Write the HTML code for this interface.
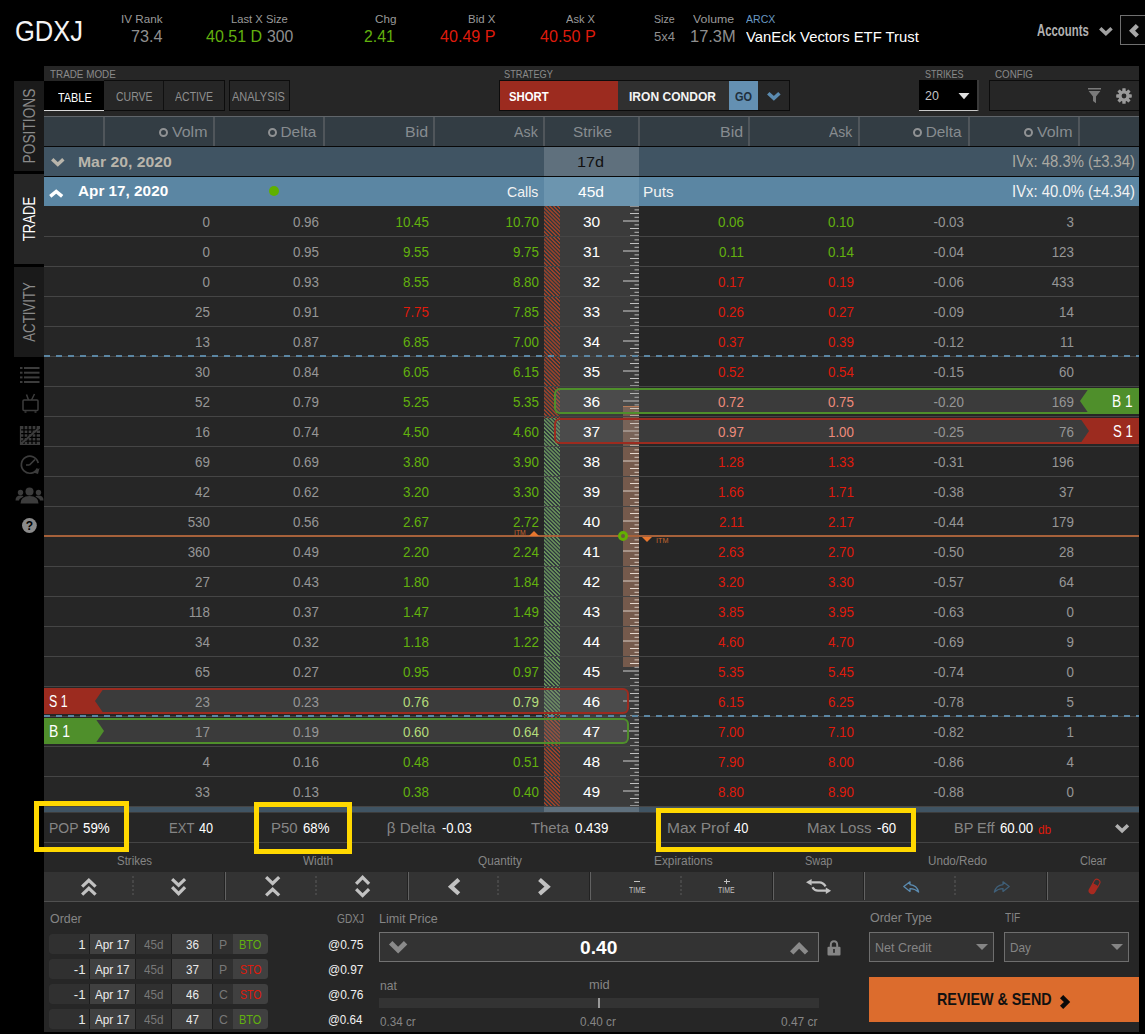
<!DOCTYPE html>
<html><head><meta charset="utf-8"><title>GDXJ Trade</title>
<style>
*{box-sizing:border-box;margin:0;padding:0}
html,body{width:1145px;height:1034px;background:#000;overflow:hidden}
body{font-family:"Liberation Sans","DejaVu Sans",sans-serif;color:#999;position:relative;font-size:14px}
.a{position:absolute;white-space:nowrap}
.g{color:#62b10e}
.rd{color:#df1b0c}
.pg{color:#b4dc7a}
.pr{color:#ee8a7a}
.n{color:#969696}
.cell{position:absolute;height:30px;line-height:33.4px;font-size:14.4px;text-align:right;width:100px;transform:scaleX(.93);transform-origin:100% 50%}
.rowline{position:absolute;left:44px;width:1095px;height:1px;background:#454545}
.strike{position:absolute;left:560.6px;width:62px;height:30px;line-height:31px;text-align:center;color:#fff;font-size:15.5px}
.sep{position:absolute;top:117px;height:29px;width:2px;background:#50565b}
.ring{position:absolute;width:9.4px;height:9.4px;border:2.6px solid #909294;border-radius:50%}
</style></head><body>

<div class="a" style="left:14.81px;top:12.93px;font-size:28.6px;line-height:37px;color:#f4f4f4;transform:scaleX(0.8923);transform-origin:0 50%;">GDXJ</div>
<div class="a" style="left:120.81px;top:11.47px;font-size:11.75px;line-height:15px;color:#9a9a9a;transform:scaleX(0.9921);transform-origin:0 50%;">IV Rank</div>
<div class="a" style="left:131.00px;top:26.46px;font-size:16.43px;line-height:21px;color:#8f8f8f;transform:scaleX(0.9865);transform-origin:0 50%;">73.4</div>
<div class="a" style="left:230.50px;top:11.47px;font-size:11.75px;line-height:15px;color:#9a9a9a;transform:scaleX(0.9550);transform-origin:0 50%;">Last X Size</div>
<div class="a" style="left:205.70px;top:26.46px;font-size:16.43px;line-height:21px;color:#62b10e;transform:scaleX(0.9765);transform-origin:0 50%;">40.51 D</div>
<div class="a" style="left:266.70px;top:26.46px;font-size:16.43px;line-height:21px;color:#8f8f8f;transform:scaleX(0.9609);transform-origin:0 50%;">300</div>
<div class="a" style="left:374.70px;top:11.47px;font-size:11.75px;line-height:15px;color:#9a9a9a;transform:scaleX(0.9943);transform-origin:0 50%;">Chg</div>
<div class="a" style="left:363.70px;top:26.46px;font-size:16.43px;line-height:21px;color:#62b10e;transform:scaleX(0.9614);transform-origin:0 50%;">2.41</div>
<div class="a" style="left:467.70px;top:11.47px;font-size:11.75px;line-height:15px;color:#9a9a9a;transform:scaleX(0.9736);transform-origin:0 50%;">Bid X</div>
<div class="a" style="left:439.60px;top:26.46px;font-size:16.43px;line-height:21px;color:#df1b0c;transform:scaleX(0.9813);transform-origin:0 50%;">40.49 P</div>
<div class="a" style="left:566.20px;top:11.47px;font-size:11.75px;line-height:15px;color:#9a9a9a;transform:scaleX(0.9432);transform-origin:0 50%;">Ask X</div>
<div class="a" style="left:539.50px;top:26.46px;font-size:16.43px;line-height:21px;color:#df1b0c;transform:scaleX(0.9849);transform-origin:0 50%;">40.50 P</div>
<div class="a" style="left:654.40px;top:11.47px;font-size:11.75px;line-height:15px;color:#9a9a9a;transform:scaleX(0.9004);transform-origin:0 50%;">Size</div>
<div class="a" style="left:654.40px;top:28.27px;font-size:13.52px;line-height:18px;color:#8f8f8f;transform:scaleX(0.9652);transform-origin:0 50%;">5x4</div>
<div class="a" style="left:693.20px;top:11.47px;font-size:11.75px;line-height:15px;color:#9a9a9a;transform:scaleX(1.0490);transform-origin:0 50%;">Volume</div>
<div class="a" style="left:690.00px;top:26.46px;font-size:16.43px;line-height:21px;color:#8f8f8f;">17.3M</div>
<div class="a" style="left:746.00px;top:11.47px;font-size:11.75px;line-height:15px;color:#6a9ac4;transform:scaleX(0.8961);transform-origin:0 50%;">ARCX</div>
<div class="a" style="left:746.00px;top:26.66px;font-size:15.18px;line-height:20px;color:#fff;transform:scaleX(0.9773);transform-origin:0 50%;">VanEck Vectors ETF Trust</div>
<div class="a" style="left:1037.10px;top:19.86px;font-size:15.81px;line-height:21px;color:#b0b0b0;font-weight:bold;transform:scaleX(0.7190);transform-origin:0 50%;">Accounts</div>
<svg class="a" style="left:1099.2px;top:27px;overflow:visible" width="13.80" height="9.00"><path d="M1.24 1.24 L6.90 6.53 L12.56 1.24" fill="none" stroke="#a0a0a0" stroke-width="3.50" stroke-miterlimit="10"/></svg>
<div class="a" style="left:1120px;top:15px;width:30px;height:30px;background:#050505;border:1px solid #707070"></div>
<svg class="a" style="left:1129.4px;top:24.4px;overflow:visible" width="9.90" height="13.60"><path d="M8.35 1.55 L3.10 6.80 L8.35 12.05" fill="none" stroke="#a8a8a8" stroke-width="4.38" stroke-miterlimit="10"/></svg>
<div class="a" style="left:14px;top:81px;width:30px;height:90px;background:#1a1a1a;"></div>
<div class="a" style="left:-71px;top:114.5px;width:200px;height:22px;transform:rotate(-90deg)"><svg width="200" height="22" style="overflow:visible"><text x="100" y="16.800" text-anchor="middle" textLength="75.0" lengthAdjust="spacingAndGlyphs" font-family="Liberation Sans, sans-serif" font-size="16.800" fill="#8a8a8a">POSITIONS</text></svg></div>
<div class="a" style="left:14px;top:174px;width:30px;height:90px;background:#262626;"></div>
<div class="a" style="left:-71px;top:207.9px;width:200px;height:22px;transform:rotate(-90deg)"><svg width="200" height="22" style="overflow:visible"><text x="100" y="16.800" text-anchor="middle" textLength="44.5" lengthAdjust="spacingAndGlyphs" font-family="Liberation Sans, sans-serif" font-size="16.800" fill="#fff">TRADE</text></svg></div>
<div class="a" style="left:14px;top:267px;width:30px;height:90px;background:#1a1a1a;"></div>
<div class="a" style="left:-71px;top:300.9px;width:200px;height:22px;transform:rotate(-90deg)"><svg width="200" height="22" style="overflow:visible"><text x="100" y="16.800" text-anchor="middle" textLength="59.4" lengthAdjust="spacingAndGlyphs" font-family="Liberation Sans, sans-serif" font-size="16.800" fill="#8a8a8a">ACTIVITY</text></svg></div>
<svg class="a" style="left:14px;top:360px" width="30" height="180" viewBox="0 0 30 180">
<g fill="#3c3c3c">
 <rect x="6" y="7" width="2.500" height="2"/><rect x="10" y="7" width="15.500" height="2"/>
 <rect x="6" y="11.700" width="2.500" height="2"/><rect x="10" y="11.700" width="15.500" height="2"/>
 <rect x="6" y="16.400" width="2.500" height="2"/><rect x="10" y="16.400" width="15.500" height="2"/>
 <rect x="6" y="21" width="2.500" height="2"/><rect x="10" y="21" width="15.500" height="2"/>
</g>
<g fill="none" stroke="#3c3c3c" stroke-width="1.500">
 <rect x="9" y="40" width="15" height="10.500" rx="1"/><path d="M14.500 40 L12.500 34.500 M17.500 40 L20.500 34 M10.500 52 h2 M20.500 52 h2"/>
</g>
<rect x="6" y="66" width="20" height="19" fill="#3c3c3c"/>
<g stroke="#000" stroke-width="1.300"><path d="M6 69.800h20M6 73.600h20M6 77.400h20M6 81.200h20M10 66v19M14 66v19M18 66v19M22 66v19"/></g>
<path d="M8 83 L25 68" stroke="#3c3c3c" stroke-width="1.800"/><path d="M6.500 66v18.500h19.500" stroke="#3c3c3c" stroke-width="1.200" fill="none"/>
<g fill="none" stroke="#3c3c3c" stroke-width="1.700"><path d="M23.500 108.500 A8.500 8.500 0 1 1 24.200 103"/><path d="M15.500 105 L21 99.500 M15.500 105 h-3.500"/></g>
<path d="M19.500 112.500 L25.500 108 L24 114z" fill="#3c3c3c"/>
<g fill="#3c3c3c"><circle cx="15.500" cy="131.500" r="4"/><path d="M6.500 143.500 q0 -7.500 9 -7.500 q9 0 9 7.500z"/><circle cx="6.500" cy="132.500" r="2.700"/><circle cx="24.500" cy="132.500" r="2.700"/><path d="M1.500 140.500 q0 -5 5 -5 q2.500 0 3 1 q-4 2 -4.500 4z M29.500 140.500 q0 -5 -5 -5 q-2.500 0 -3 1 q4 2 4.500 4z"/></g>
<circle cx="15.400" cy="165.500" r="7.400" fill="#8a8a8a"/>
<text x="15.400" y="170" font-size="12" font-weight="bold" text-anchor="middle" fill="#000" font-family="Liberation Sans, sans-serif">?</text>
</svg>
<div class="a" style="left:44px;top:66px;width:1095px;height:965.5px;background:#262626;"></div>
<div class="a" style="left:49.70px;top:67.17px;font-size:10.92px;line-height:14px;color:#8a8a8a;transform:scaleX(0.9042);transform-origin:0 50%;">TRADE MODE</div>
<div class="a" style="left:504.20px;top:67.17px;font-size:10.92px;line-height:14px;color:#8a8a8a;transform:scaleX(0.8433);transform-origin:0 50%;">STRATEGY</div>
<div class="a" style="left:924.50px;top:67.17px;font-size:10.92px;line-height:14px;color:#8a8a8a;transform:scaleX(0.8256);transform-origin:0 50%;">STRIKES</div>
<div class="a" style="left:994.70px;top:67.17px;font-size:10.92px;line-height:14px;color:#8a8a8a;transform:scaleX(0.8944);transform-origin:0 50%;">CONFIG</div>
<div class="a" style="left:44px;top:81px;width:60px;height:29px;background:#000;"></div>
<div class="a" style="left:44px;top:110px;width:60px;height:1px;background:#d8d8d8;"></div>
<div class="a" style="left:104px;top:80px;width:121px;height:31px;background:transparent;border:1px solid #0c0c0c;border-left:none"></div>
<div class="a" style="left:163px;top:81px;width:1px;height:29px;background:#101010;"></div>
<div class="a" style="left:229px;top:80px;width:61px;height:31px;background:transparent;border:1px solid #0c0c0c"></div>
<div class="a" style="left:57.60px;top:88.77px;font-size:13.31px;line-height:17px;color:#fff;transform:scaleX(0.8190);transform-origin:0 50%;">TABLE</div>
<div class="a" style="left:115.50px;top:88.27px;font-size:13.31px;line-height:17px;color:#8f8f8f;transform:scaleX(0.7882);transform-origin:0 50%;">CURVE</div>
<div class="a" style="left:175.20px;top:88.27px;font-size:13.31px;line-height:17px;color:#8f8f8f;transform:scaleX(0.7932);transform-origin:0 50%;">ACTIVE</div>
<div class="a" style="left:232.00px;top:88.27px;font-size:13.31px;line-height:17px;color:#8f8f8f;transform:scaleX(0.8258);transform-origin:0 50%;">ANALYSIS</div>
<div class="a" style="left:499px;top:80px;width:291px;height:31px;background:#303030;border:1px solid #0c0c0c"></div>
<div class="a" style="left:500px;top:81px;width:118px;height:29px;background:#9c2b1f;"></div>
<div class="a" style="left:508.90px;top:87.97px;font-size:13.31px;line-height:17px;color:#fff;font-weight:bold;transform:scaleX(0.8531);transform-origin:0 50%;">SHORT</div>
<div class="a" style="left:629.30px;top:87.97px;font-size:13.31px;line-height:17px;color:#f4f4f4;font-weight:bold;transform:scaleX(0.9053);transform-origin:0 50%;">IRON CONDOR</div>
<div class="a" style="left:729px;top:81px;width:29px;height:29px;background:#6490b2;"></div>
<div class="a" style="left:734.70px;top:87.97px;font-size:13.31px;line-height:17px;color:#1f2f3c;font-weight:bold;transform:scaleX(0.8209);transform-origin:0 50%;">GO</div>
<div class="a" style="left:758px;top:81px;width:31px;height:29px;background:#262626;"></div>
<svg class="a" style="left:767.1px;top:92px;overflow:visible" width="13.70" height="8.80"><path d="M1.27 1.27 L6.85 6.25 L12.43 1.27" fill="none" stroke="#5b8bb0" stroke-width="3.60" stroke-miterlimit="10"/></svg>
<div class="a" style="left:919px;top:80px;width:60px;height:31px;background:#000;border-bottom:1px solid #c8c8c8;border-right:2px solid #3a3a3a"></div>
<div class="a" style="left:925.20px;top:86.87px;font-size:13.31px;line-height:17px;color:#c4c4c4;transform:scaleX(0.9378);transform-origin:0 50%;">20</div>
<svg class="a" style="left:958px;top:93px" width="12" height="7" viewBox="0 0 12 7"><path d="M0.500 0 H11.500 L6 6.200z" fill="#e0e0e0"/></svg>
<div class="a" style="left:989px;top:80px;width:150px;height:31px;background:transparent;border:1px solid #0c0c0c;border-right:none"></div>
<svg class="a" style="left:1087px;top:87px" width="15" height="18" viewBox="0 0 15 18"><path d="M1 1h13v1.500h-13z M1.600 4 h11.800 l-4.400 5.500 v6.800 l-3 -2.200 v-4.600z" fill="#7a7a7a"/></svg>
<svg class="a" style="left:1116px;top:88px" width="16" height="16" viewBox="0 0 16 16"><g fill="#9a9a9a"><circle cx="8" cy="8" r="5.600"/>
<rect x="6.300" y="0.200" width="3.400" height="15.600" rx=".6"/><rect x="0.200" y="6.300" width="15.600" height="3.400" rx=".6"/>
<rect x="6.300" y="0.200" width="3.400" height="15.600" rx=".6" transform="rotate(45 8 8)"/><rect x="6.300" y="0.200" width="3.400" height="15.600" rx=".6" transform="rotate(-45 8 8)"/></g><circle cx="8" cy="8" r="2.400" fill="#262626"/></svg>
<div class="a" style="left:44px;top:116px;width:1095px;height:30px;background:#333d44;"></div>
<div class="a" style="left:44px;top:116px;width:1095px;height:1px;background:#60656a;"></div>
<div class="a" style="left:44px;top:146px;width:1095px;height:1px;background:#080808;"></div>
<div class="a" style="left:44px;top:147px;width:1095px;height:29px;background:#405463;"></div>
<div class="a" style="left:44px;top:176px;width:1095px;height:1px;background:#080808;"></div>
<div class="a" style="left:44px;top:177px;width:1095px;height:29px;background:#5b86a3;"></div>
<div class="sep" style="left:103px"></div>
<div class="sep" style="left:213px"></div>
<div class="sep" style="left:323px"></div>
<div class="sep" style="left:433px"></div>
<div class="sep" style="left:543px"></div>
<div class="sep" style="left:638px"></div>
<div class="sep" style="left:748px"></div>
<div class="sep" style="left:858px"></div>
<div class="sep" style="left:968px"></div>
<div class="sep" style="left:1078px"></div>
<div class="a" style="left:172.30px;top:122.16px;font-size:15.39px;line-height:20px;color:#878c90;transform:scaleX(1.0368);transform-origin:0 50%;">Volm</div>
<div class="ring" style="left:159px;top:127.500px"></div>
<div class="a" style="left:280.50px;top:122.16px;font-size:15.39px;line-height:20px;color:#878c90;">Delta</div>
<div class="ring" style="left:268px;top:127.500px"></div>
<div class="a" style="left:404.86px;top:122.16px;font-size:15.39px;line-height:20px;color:#878c90;transform:scaleX(1.0401);transform-origin:0 50%;">Bid</div>
<div class="a" style="left:514.10px;top:122.16px;font-size:15.39px;line-height:20px;color:#878c90;transform:scaleX(0.9290);transform-origin:0 50%;">Ask</div>
<div class="a" style="left:572.60px;top:122.16px;font-size:15.39px;line-height:20px;color:#878c90;transform:scaleX(0.9935);transform-origin:0 50%;">Strike</div>
<div class="a" style="left:719.76px;top:122.16px;font-size:15.39px;line-height:20px;color:#878c90;transform:scaleX(1.0401);transform-origin:0 50%;">Bid</div>
<div class="a" style="left:828.50px;top:122.16px;font-size:15.39px;line-height:20px;color:#878c90;transform:scaleX(0.9058);transform-origin:0 50%;">Ask</div>
<div class="a" style="left:925.70px;top:122.16px;font-size:15.39px;line-height:20px;color:#878c90;">Delta</div>
<div class="ring" style="left:913px;top:127.500px"></div>
<div class="a" style="left:1037.20px;top:122.16px;font-size:15.39px;line-height:20px;color:#878c90;transform:scaleX(1.0368);transform-origin:0 50%;">Volm</div>
<div class="ring" style="left:1024px;top:127.500px"></div>
<div class="a" style="left:544px;top:206px;width:95px;height:601px;background:#3b3b3b;"></div>
<div class="a" style="left:544px;top:147px;width:95px;height:29px;background:#5f707d;"></div>
<div class="a" style="left:544px;top:177px;width:95px;height:29px;background:#6c95af;"></div>
<div class="a" style="left:577.13px;top:152.36px;font-size:15.18px;line-height:20px;color:#111;transform:scaleX(1.0680);transform-origin:0 50%;">17d</div>
<div class="a" style="left:578.20px;top:181.96px;font-size:15.18px;line-height:20px;color:#fff;transform:scaleX(1.0251);transform-origin:0 50%;">45d</div>
<svg class="a" style="left:50.5px;top:157.8px;overflow:visible" width="13.60" height="8.90"><path d="M1.24 1.24 L6.80 6.43 L12.36 1.24" fill="none" stroke="#b9b5ab" stroke-width="3.50" stroke-miterlimit="10"/></svg>
<svg class="a" style="left:49.2px;top:188.5px;overflow:visible" width="14.40" height="8.60"><path d="M1.24 7.36 L7.20 2.47 L13.16 7.36" fill="none" stroke="#fff" stroke-width="3.50" stroke-miterlimit="10"/></svg>
<div class="a" style="left:77.76px;top:151.96px;font-size:15.18px;line-height:20px;color:#b9b5ab;font-weight:bold;transform:scaleX(1.0381);transform-origin:0 50%;">Mar 20, 2020</div>
<div class="a" style="left:78.20px;top:181.36px;font-size:15.18px;line-height:20px;color:#fff;font-weight:bold;transform:scaleX(1.0083);transform-origin:0 50%;">Apr 17, 2020</div>
<div class="a" style="left:268.7px;top:185.7px;width:10.3px;height:10.3px;background:#5fb000;border-radius:50%"></div>
<div class="a" style="left:506.60px;top:181.96px;font-size:15.18px;line-height:20px;color:#f2f2f2;transform:scaleX(0.9286);transform-origin:0 50%;">Calls</div>
<div class="a" style="left:643.49px;top:181.96px;font-size:15.18px;line-height:20px;color:#f2f2f2;transform:scaleX(1.0110);transform-origin:0 50%;">Puts</div>
<div class="a" style="left:1011.65px;top:152.36px;font-size:15.6px;line-height:20px;color:#aaa9a2;transform:scaleX(0.9535);transform-origin:0 50%;">IVx: 48.3% (±3.34)</div>
<div class="a" style="left:1011.65px;top:182.16px;font-size:15.6px;line-height:20px;color:#f2f2f2;transform:scaleX(0.9535);transform-origin:0 50%;">IVx: 40.0% (±4.34)</div>
<div class="a" style="left:544px;top:206px;width:16px;height:212px;background:repeating-linear-gradient(45deg,#9c4228 0,#9c4228 0.950px,#2f383e 1.500px,#2f383e 2.250px,#9c4228 2.740px);"></div>
<div class="a" style="left:544px;top:418px;width:16px;height:297px;background:repeating-linear-gradient(45deg,#68905a 0,#68905a 0.950px,#2f383e 1.500px,#2f383e 2.250px,#68905a 2.740px);"></div>
<div class="a" style="left:544px;top:715px;width:16px;height:92px;background:repeating-linear-gradient(45deg,#9c4228 0,#9c4228 0.950px,#2f383e 1.500px,#2f383e 2.250px,#9c4228 2.740px);"></div>
<svg class="a" style="left:544px;top:206px" width="95" height="601" viewBox="0 0 95 601">
<rect x="79" y="200" width="16" height="261" fill="#755a4c"/>
<rect x="79" y="200" width="16" height="1" fill="#c97a4a"/>
<rect x="86" y="-1.00" width="9" height="2" fill="#8f8f8f"/>
<rect x="90.500" y="3.25" width="4.500" height="1.200" fill="#a5a5a5"/>
<rect x="86" y="7.00" width="9" height="1" fill="#c0c0c0"/>
<rect x="90.500" y="10.75" width="4.500" height="1.200" fill="#a5a5a5"/>
<rect x="79" y="14.00" width="16" height="2" fill="#858585"/>
<rect x="90.500" y="18.25" width="4.500" height="1.200" fill="#a5a5a5"/>
<rect x="86" y="22.00" width="9" height="1" fill="#c0c0c0"/>
<rect x="90.500" y="25.75" width="4.500" height="1.200" fill="#a5a5a5"/>
<rect x="86" y="29.00" width="9" height="2" fill="#8f8f8f"/>
<rect x="90.500" y="33.25" width="4.500" height="1.200" fill="#a5a5a5"/>
<rect x="86" y="37.00" width="9" height="1" fill="#c0c0c0"/>
<rect x="90.500" y="40.75" width="4.500" height="1.200" fill="#a5a5a5"/>
<rect x="79" y="44.00" width="16" height="2" fill="#858585"/>
<rect x="90.500" y="48.25" width="4.500" height="1.200" fill="#a5a5a5"/>
<rect x="86" y="52.00" width="9" height="1" fill="#c0c0c0"/>
<rect x="90.500" y="55.75" width="4.500" height="1.200" fill="#a5a5a5"/>
<rect x="86" y="59.00" width="9" height="2" fill="#8f8f8f"/>
<rect x="90.500" y="63.25" width="4.500" height="1.200" fill="#a5a5a5"/>
<rect x="86" y="67.00" width="9" height="1" fill="#c0c0c0"/>
<rect x="90.500" y="70.75" width="4.500" height="1.200" fill="#a5a5a5"/>
<rect x="79" y="74.00" width="16" height="2" fill="#858585"/>
<rect x="90.500" y="78.25" width="4.500" height="1.200" fill="#a5a5a5"/>
<rect x="86" y="82.00" width="9" height="1" fill="#c0c0c0"/>
<rect x="90.500" y="85.75" width="4.500" height="1.200" fill="#a5a5a5"/>
<rect x="86" y="89.00" width="9" height="2" fill="#8f8f8f"/>
<rect x="90.500" y="93.25" width="4.500" height="1.200" fill="#a5a5a5"/>
<rect x="86" y="97.00" width="9" height="1" fill="#c0c0c0"/>
<rect x="90.500" y="100.75" width="4.500" height="1.200" fill="#a5a5a5"/>
<rect x="79" y="104.00" width="16" height="2" fill="#858585"/>
<rect x="90.500" y="108.25" width="4.500" height="1.200" fill="#a5a5a5"/>
<rect x="86" y="112.00" width="9" height="1" fill="#c0c0c0"/>
<rect x="90.500" y="115.75" width="4.500" height="1.200" fill="#a5a5a5"/>
<rect x="86" y="119.00" width="9" height="2" fill="#8f8f8f"/>
<rect x="90.500" y="123.25" width="4.500" height="1.200" fill="#a5a5a5"/>
<rect x="86" y="127.00" width="9" height="1" fill="#c0c0c0"/>
<rect x="90.500" y="130.75" width="4.500" height="1.200" fill="#a5a5a5"/>
<rect x="79" y="134.00" width="16" height="2" fill="#858585"/>
<rect x="90.500" y="138.25" width="4.500" height="1.200" fill="#a5a5a5"/>
<rect x="86" y="142.00" width="9" height="1" fill="#c0c0c0"/>
<rect x="90.500" y="145.75" width="4.500" height="1.200" fill="#a5a5a5"/>
<rect x="86" y="149.00" width="9" height="2" fill="#8f8f8f"/>
<rect x="90.500" y="153.25" width="4.500" height="1.200" fill="#a5a5a5"/>
<rect x="86" y="157.00" width="9" height="1" fill="#c0c0c0"/>
<rect x="90.500" y="160.75" width="4.500" height="1.200" fill="#a5a5a5"/>
<rect x="79" y="164.00" width="16" height="2" fill="#858585"/>
<rect x="90.500" y="168.25" width="4.500" height="1.200" fill="#a5a5a5"/>
<rect x="86" y="172.00" width="9" height="1" fill="#c0c0c0"/>
<rect x="90.500" y="175.75" width="4.500" height="1.200" fill="#a5a5a5"/>
<rect x="86" y="179.00" width="9" height="2" fill="#8f8f8f"/>
<rect x="90.500" y="183.25" width="4.500" height="1.200" fill="#a5a5a5"/>
<rect x="86" y="187.00" width="9" height="1" fill="#c0c0c0"/>
<rect x="90.500" y="190.75" width="4.500" height="1.200" fill="#a5a5a5"/>
<rect x="79" y="194.00" width="16" height="2" fill="#858585"/>
<rect x="90.500" y="198.25" width="4.500" height="1.200" fill="#a5a5a5"/>
<rect x="86" y="202.00" width="9" height="1" fill="#e6d8ce"/>
<rect x="90.500" y="205.75" width="4.500" height="1.200" fill="#c8b8ae"/>
<rect x="86" y="209.00" width="9" height="2" fill="#b8a69b"/>
<rect x="90.500" y="213.25" width="4.500" height="1.200" fill="#c8b8ae"/>
<rect x="86" y="217.00" width="9" height="1" fill="#e6d8ce"/>
<rect x="90.500" y="220.75" width="4.500" height="1.200" fill="#c8b8ae"/>
<rect x="79" y="224.00" width="16" height="2" fill="#a8958a"/>
<rect x="90.500" y="228.25" width="4.500" height="1.200" fill="#c8b8ae"/>
<rect x="86" y="232.00" width="9" height="1" fill="#e6d8ce"/>
<rect x="90.500" y="235.75" width="4.500" height="1.200" fill="#c8b8ae"/>
<rect x="86" y="239.00" width="9" height="2" fill="#b8a69b"/>
<rect x="90.500" y="243.25" width="4.500" height="1.200" fill="#c8b8ae"/>
<rect x="86" y="247.00" width="9" height="1" fill="#e6d8ce"/>
<rect x="90.500" y="250.75" width="4.500" height="1.200" fill="#c8b8ae"/>
<rect x="79" y="254.00" width="16" height="2" fill="#a8958a"/>
<rect x="90.500" y="258.25" width="4.500" height="1.200" fill="#c8b8ae"/>
<rect x="86" y="262.00" width="9" height="1" fill="#e6d8ce"/>
<rect x="90.500" y="265.75" width="4.500" height="1.200" fill="#c8b8ae"/>
<rect x="86" y="269.00" width="9" height="2" fill="#b8a69b"/>
<rect x="90.500" y="273.25" width="4.500" height="1.200" fill="#c8b8ae"/>
<rect x="86" y="277.00" width="9" height="1" fill="#e6d8ce"/>
<rect x="90.500" y="280.75" width="4.500" height="1.200" fill="#c8b8ae"/>
<rect x="79" y="284.00" width="16" height="2" fill="#a8958a"/>
<rect x="90.500" y="288.25" width="4.500" height="1.200" fill="#c8b8ae"/>
<rect x="86" y="292.00" width="9" height="1" fill="#e6d8ce"/>
<rect x="90.500" y="295.75" width="4.500" height="1.200" fill="#c8b8ae"/>
<rect x="86" y="299.00" width="9" height="2" fill="#b8a69b"/>
<rect x="90.500" y="303.25" width="4.500" height="1.200" fill="#c8b8ae"/>
<rect x="86" y="307.00" width="9" height="1" fill="#e6d8ce"/>
<rect x="90.500" y="310.75" width="4.500" height="1.200" fill="#c8b8ae"/>
<rect x="79" y="314.00" width="16" height="2" fill="#a8958a"/>
<rect x="90.500" y="318.25" width="4.500" height="1.200" fill="#c8b8ae"/>
<rect x="86" y="322.00" width="9" height="1" fill="#e6d8ce"/>
<rect x="90.500" y="325.75" width="4.500" height="1.200" fill="#c8b8ae"/>
<rect x="86" y="329.00" width="9" height="2" fill="#b8a69b"/>
<rect x="90.500" y="333.25" width="4.500" height="1.200" fill="#c8b8ae"/>
<rect x="86" y="337.00" width="9" height="1" fill="#e6d8ce"/>
<rect x="90.500" y="340.75" width="4.500" height="1.200" fill="#c8b8ae"/>
<rect x="79" y="344.00" width="16" height="2" fill="#a8958a"/>
<rect x="90.500" y="348.25" width="4.500" height="1.200" fill="#c8b8ae"/>
<rect x="86" y="352.00" width="9" height="1" fill="#e6d8ce"/>
<rect x="90.500" y="355.75" width="4.500" height="1.200" fill="#c8b8ae"/>
<rect x="86" y="359.00" width="9" height="2" fill="#b8a69b"/>
<rect x="90.500" y="363.25" width="4.500" height="1.200" fill="#c8b8ae"/>
<rect x="86" y="367.00" width="9" height="1" fill="#e6d8ce"/>
<rect x="90.500" y="370.75" width="4.500" height="1.200" fill="#c8b8ae"/>
<rect x="79" y="374.00" width="16" height="2" fill="#a8958a"/>
<rect x="90.500" y="378.25" width="4.500" height="1.200" fill="#c8b8ae"/>
<rect x="86" y="382.00" width="9" height="1" fill="#e6d8ce"/>
<rect x="90.500" y="385.75" width="4.500" height="1.200" fill="#c8b8ae"/>
<rect x="86" y="389.00" width="9" height="2" fill="#b8a69b"/>
<rect x="90.500" y="393.25" width="4.500" height="1.200" fill="#c8b8ae"/>
<rect x="86" y="397.00" width="9" height="1" fill="#e6d8ce"/>
<rect x="90.500" y="400.75" width="4.500" height="1.200" fill="#c8b8ae"/>
<rect x="79" y="404.00" width="16" height="2" fill="#a8958a"/>
<rect x="90.500" y="408.25" width="4.500" height="1.200" fill="#c8b8ae"/>
<rect x="86" y="412.00" width="9" height="1" fill="#e6d8ce"/>
<rect x="90.500" y="415.75" width="4.500" height="1.200" fill="#c8b8ae"/>
<rect x="86" y="419.00" width="9" height="2" fill="#b8a69b"/>
<rect x="90.500" y="423.25" width="4.500" height="1.200" fill="#c8b8ae"/>
<rect x="86" y="427.00" width="9" height="1" fill="#e6d8ce"/>
<rect x="90.500" y="430.75" width="4.500" height="1.200" fill="#c8b8ae"/>
<rect x="79" y="434.00" width="16" height="2" fill="#a8958a"/>
<rect x="90.500" y="438.25" width="4.500" height="1.200" fill="#c8b8ae"/>
<rect x="86" y="442.00" width="9" height="1" fill="#e6d8ce"/>
<rect x="90.500" y="445.75" width="4.500" height="1.200" fill="#c8b8ae"/>
<rect x="86" y="449.00" width="9" height="2" fill="#b8a69b"/>
<rect x="90.500" y="453.25" width="4.500" height="1.200" fill="#c8b8ae"/>
<rect x="86" y="457.00" width="9" height="1" fill="#e6d8ce"/>
<rect x="90.500" y="460.75" width="4.500" height="1.200" fill="#a5a5a5"/>
<rect x="79" y="464.00" width="16" height="2" fill="#858585"/>
<rect x="90.500" y="468.25" width="4.500" height="1.200" fill="#a5a5a5"/>
<rect x="86" y="472.00" width="9" height="1" fill="#c0c0c0"/>
<rect x="90.500" y="475.75" width="4.500" height="1.200" fill="#a5a5a5"/>
<rect x="86" y="479.00" width="9" height="2" fill="#8f8f8f"/>
<rect x="90.500" y="483.25" width="4.500" height="1.200" fill="#a5a5a5"/>
<rect x="86" y="487.00" width="9" height="1" fill="#c0c0c0"/>
<rect x="90.500" y="490.75" width="4.500" height="1.200" fill="#a5a5a5"/>
<rect x="79" y="494.00" width="16" height="2" fill="#858585"/>
<rect x="90.500" y="498.25" width="4.500" height="1.200" fill="#a5a5a5"/>
<rect x="86" y="502.00" width="9" height="1" fill="#c0c0c0"/>
<rect x="90.500" y="505.75" width="4.500" height="1.200" fill="#a5a5a5"/>
<rect x="86" y="509.00" width="9" height="2" fill="#8f8f8f"/>
<rect x="90.500" y="513.25" width="4.500" height="1.200" fill="#a5a5a5"/>
<rect x="86" y="517.00" width="9" height="1" fill="#c0c0c0"/>
<rect x="90.500" y="520.75" width="4.500" height="1.200" fill="#a5a5a5"/>
<rect x="79" y="524.00" width="16" height="2" fill="#858585"/>
<rect x="90.500" y="528.25" width="4.500" height="1.200" fill="#a5a5a5"/>
<rect x="86" y="532.00" width="9" height="1" fill="#c0c0c0"/>
<rect x="90.500" y="535.75" width="4.500" height="1.200" fill="#a5a5a5"/>
<rect x="86" y="539.00" width="9" height="2" fill="#8f8f8f"/>
<rect x="90.500" y="543.25" width="4.500" height="1.200" fill="#a5a5a5"/>
<rect x="86" y="547.00" width="9" height="1" fill="#c0c0c0"/>
<rect x="90.500" y="550.75" width="4.500" height="1.200" fill="#a5a5a5"/>
<rect x="79" y="554.00" width="16" height="2" fill="#858585"/>
<rect x="90.500" y="558.25" width="4.500" height="1.200" fill="#a5a5a5"/>
<rect x="86" y="562.00" width="9" height="1" fill="#c0c0c0"/>
<rect x="90.500" y="565.75" width="4.500" height="1.200" fill="#a5a5a5"/>
<rect x="86" y="569.00" width="9" height="2" fill="#8f8f8f"/>
<rect x="90.500" y="573.25" width="4.500" height="1.200" fill="#a5a5a5"/>
<rect x="86" y="577.00" width="9" height="1" fill="#c0c0c0"/>
<rect x="90.500" y="580.75" width="4.500" height="1.200" fill="#a5a5a5"/>
<rect x="79" y="584.00" width="16" height="2" fill="#858585"/>
<rect x="90.500" y="588.25" width="4.500" height="1.200" fill="#a5a5a5"/>
<rect x="86" y="592.00" width="9" height="1" fill="#c0c0c0"/>
<rect x="90.500" y="595.75" width="4.500" height="1.200" fill="#a5a5a5"/>
<rect x="86" y="599.00" width="9" height="2" fill="#8f8f8f"/>
</svg>
<div class="rowline" style="top:236px"></div>
<div class="rowline" style="top:266px"></div>
<div class="rowline" style="top:296px"></div>
<div class="rowline" style="top:326px"></div>
<div class="rowline" style="top:356px"></div>
<div class="rowline" style="top:386px"></div>
<div class="rowline" style="top:416px"></div>
<div class="rowline" style="top:446px"></div>
<div class="rowline" style="top:476px"></div>
<div class="rowline" style="top:506px"></div>
<div class="rowline" style="top:536px"></div>
<div class="rowline" style="top:566px"></div>
<div class="rowline" style="top:596px"></div>
<div class="rowline" style="top:626px"></div>
<div class="rowline" style="top:656px"></div>
<div class="rowline" style="top:686px"></div>
<div class="rowline" style="top:716px"></div>
<div class="rowline" style="top:746px"></div>
<div class="rowline" style="top:776px"></div>
<div class="rowline" style="top:806px"></div>
<div class="a" style="left:554px;top:388px;width:585px;height:26px;border:2px solid #4f8f2b;border-right:none;border-radius:6px 0 0 6px;background:rgba(130,130,130,.24)"></div>
<svg class="a" style="left:1080px;top:388px" width="59" height="26" viewBox="0 0 59 26"><polygon points="9,0 59,0 59,26 9,26 0,13" fill="#4f8f2b"/></svg>
<div class="a" style="left:1111.95px;top:390.66px;font-size:16.12px;line-height:21px;color:#fff;transform:scaleX(0.8527);transform-origin:0 50%;">B 1</div>
<div class="a" style="left:554px;top:418px;width:585px;height:26px;border:2px solid #9c2b1f;border-right:none;border-radius:6px 0 0 6px;background:rgba(130,130,130,.24)"></div>
<svg class="a" style="left:1080px;top:418px" width="59" height="26" viewBox="0 0 59 26"><polygon points="0,0 59,0 59,26 0,26 9,13" fill="#9c2b1f"/></svg>
<div class="a" style="left:1112.80px;top:420.66px;font-size:16.12px;line-height:21px;color:#fff;transform:scaleX(0.8175);transform-origin:0 50%;">S 1</div>
<div class="a" style="left:44px;top:688px;width:585px;height:26px;border:2px solid #9c2b1f;border-left:none;border-radius:0 6px 6px 0;background:rgba(130,130,130,.24)"></div>
<svg class="a" style="left:44px;top:688px" width="60" height="26" viewBox="0 0 60 26"><polygon points="0,0 60,0 51,13 60,26 0,26" fill="#9c2b1f"/></svg>
<div class="a" style="left:49.00px;top:690.66px;font-size:16.12px;line-height:21px;color:#fff;transform:scaleX(0.7679);transform-origin:0 50%;">S 1</div>
<div class="a" style="left:44px;top:718px;width:585px;height:26px;border:2px solid #4f8f2b;border-left:none;border-radius:0 6px 6px 0;background:rgba(130,130,130,.24)"></div>
<svg class="a" style="left:44px;top:718px" width="60" height="26" viewBox="0 0 60 26"><polygon points="0,0 51,0 60,13 51,26 0,26" fill="#4f8f2b"/></svg>
<div class="a" style="left:48.73px;top:720.66px;font-size:16.12px;line-height:21px;color:#fff;transform:scaleX(0.8656);transform-origin:0 50%;">B 1</div>
<div class="a" style="left:44px;top:355px;width:1095px;height:2px;background:repeating-linear-gradient(90deg,#5b86a3 0 6px,transparent 6px 12px)"></div>
<div class="a" style="left:44px;top:715px;width:1095px;height:2px;background:repeating-linear-gradient(90deg,#5b86a3 0 6px,transparent 6px 12px)"></div>
<div class="cell n" style="left:109.69999999999999px;top:206px">0</div>
<div class="cell n" style="left:218.89999999999998px;top:206px">0.96</div>
<div class="cell g" style="left:328.5px;top:206px">10.45</div>
<div class="cell g" style="left:438.79999999999995px;top:206px">10.70</div>
<div class="cell g" style="left:644px;top:206px">0.06</div>
<div class="cell g" style="left:754px;top:206px">0.10</div>
<div class="cell n" style="left:863.7px;top:206px">-0.03</div>
<div class="cell n" style="left:974.2px;top:206px">3</div>
<div class="strike" style="top:206px">30</div>
<div class="cell n" style="left:109.69999999999999px;top:236px">0</div>
<div class="cell n" style="left:218.89999999999998px;top:236px">0.95</div>
<div class="cell g" style="left:328.5px;top:236px">9.55</div>
<div class="cell g" style="left:438.79999999999995px;top:236px">9.75</div>
<div class="cell g" style="left:644px;top:236px">0.11</div>
<div class="cell g" style="left:754px;top:236px">0.14</div>
<div class="cell n" style="left:863.7px;top:236px">-0.04</div>
<div class="cell n" style="left:974.2px;top:236px">123</div>
<div class="strike" style="top:236px">31</div>
<div class="cell n" style="left:109.69999999999999px;top:266px">0</div>
<div class="cell n" style="left:218.89999999999998px;top:266px">0.93</div>
<div class="cell g" style="left:328.5px;top:266px">8.55</div>
<div class="cell g" style="left:438.79999999999995px;top:266px">8.80</div>
<div class="cell rd" style="left:644px;top:266px">0.17</div>
<div class="cell rd" style="left:754px;top:266px">0.19</div>
<div class="cell n" style="left:863.7px;top:266px">-0.06</div>
<div class="cell n" style="left:974.2px;top:266px">433</div>
<div class="strike" style="top:266px">32</div>
<div class="cell n" style="left:109.69999999999999px;top:296px">25</div>
<div class="cell n" style="left:218.89999999999998px;top:296px">0.91</div>
<div class="cell rd" style="left:328.5px;top:296px">7.75</div>
<div class="cell g" style="left:438.79999999999995px;top:296px">7.85</div>
<div class="cell rd" style="left:644px;top:296px">0.26</div>
<div class="cell rd" style="left:754px;top:296px">0.27</div>
<div class="cell n" style="left:863.7px;top:296px">-0.09</div>
<div class="cell n" style="left:974.2px;top:296px">14</div>
<div class="strike" style="top:296px">33</div>
<div class="cell n" style="left:109.69999999999999px;top:326px">13</div>
<div class="cell n" style="left:218.89999999999998px;top:326px">0.87</div>
<div class="cell g" style="left:328.5px;top:326px">6.85</div>
<div class="cell g" style="left:438.79999999999995px;top:326px">7.00</div>
<div class="cell rd" style="left:644px;top:326px">0.37</div>
<div class="cell rd" style="left:754px;top:326px">0.39</div>
<div class="cell n" style="left:863.7px;top:326px">-0.12</div>
<div class="cell n" style="left:974.2px;top:326px">11</div>
<div class="strike" style="top:326px">34</div>
<div class="cell n" style="left:109.69999999999999px;top:356px">30</div>
<div class="cell n" style="left:218.89999999999998px;top:356px">0.84</div>
<div class="cell g" style="left:328.5px;top:356px">6.05</div>
<div class="cell g" style="left:438.79999999999995px;top:356px">6.15</div>
<div class="cell rd" style="left:644px;top:356px">0.52</div>
<div class="cell rd" style="left:754px;top:356px">0.54</div>
<div class="cell n" style="left:863.7px;top:356px">-0.15</div>
<div class="cell n" style="left:974.2px;top:356px">60</div>
<div class="strike" style="top:356px">35</div>
<div class="cell n" style="left:109.69999999999999px;top:386px">52</div>
<div class="cell n" style="left:218.89999999999998px;top:386px">0.79</div>
<div class="cell g" style="left:328.5px;top:386px">5.25</div>
<div class="cell g" style="left:438.79999999999995px;top:386px">5.35</div>
<div class="cell pr" style="left:644px;top:386px">0.72</div>
<div class="cell pr" style="left:754px;top:386px">0.75</div>
<div class="cell n" style="left:863.7px;top:386px">-0.20</div>
<div class="cell n" style="left:974.2px;top:386px">169</div>
<div class="strike" style="top:386px">36</div>
<div class="cell n" style="left:109.69999999999999px;top:416px">16</div>
<div class="cell n" style="left:218.89999999999998px;top:416px">0.74</div>
<div class="cell g" style="left:328.5px;top:416px">4.50</div>
<div class="cell g" style="left:438.79999999999995px;top:416px">4.60</div>
<div class="cell pr" style="left:644px;top:416px">0.97</div>
<div class="cell pr" style="left:754px;top:416px">1.00</div>
<div class="cell n" style="left:863.7px;top:416px">-0.25</div>
<div class="cell n" style="left:974.2px;top:416px">76</div>
<div class="strike" style="top:416px">37</div>
<div class="cell n" style="left:109.69999999999999px;top:446px">69</div>
<div class="cell n" style="left:218.89999999999998px;top:446px">0.69</div>
<div class="cell g" style="left:328.5px;top:446px">3.80</div>
<div class="cell g" style="left:438.79999999999995px;top:446px">3.90</div>
<div class="cell rd" style="left:644px;top:446px">1.28</div>
<div class="cell rd" style="left:754px;top:446px">1.33</div>
<div class="cell n" style="left:863.7px;top:446px">-0.31</div>
<div class="cell n" style="left:974.2px;top:446px">196</div>
<div class="strike" style="top:446px">38</div>
<div class="cell n" style="left:109.69999999999999px;top:476px">42</div>
<div class="cell n" style="left:218.89999999999998px;top:476px">0.62</div>
<div class="cell g" style="left:328.5px;top:476px">3.20</div>
<div class="cell g" style="left:438.79999999999995px;top:476px">3.30</div>
<div class="cell rd" style="left:644px;top:476px">1.66</div>
<div class="cell rd" style="left:754px;top:476px">1.71</div>
<div class="cell n" style="left:863.7px;top:476px">-0.38</div>
<div class="cell n" style="left:974.2px;top:476px">37</div>
<div class="strike" style="top:476px">39</div>
<div class="cell n" style="left:109.69999999999999px;top:506px">530</div>
<div class="cell n" style="left:218.89999999999998px;top:506px">0.56</div>
<div class="cell g" style="left:328.5px;top:506px">2.67</div>
<div class="cell g" style="left:438.79999999999995px;top:506px">2.72</div>
<div class="cell rd" style="left:644px;top:506px">2.11</div>
<div class="cell rd" style="left:754px;top:506px">2.17</div>
<div class="cell n" style="left:863.7px;top:506px">-0.44</div>
<div class="cell n" style="left:974.2px;top:506px">179</div>
<div class="strike" style="top:506px">40</div>
<div class="cell n" style="left:109.69999999999999px;top:536px">360</div>
<div class="cell n" style="left:218.89999999999998px;top:536px">0.49</div>
<div class="cell g" style="left:328.5px;top:536px">2.20</div>
<div class="cell g" style="left:438.79999999999995px;top:536px">2.24</div>
<div class="cell rd" style="left:644px;top:536px">2.63</div>
<div class="cell rd" style="left:754px;top:536px">2.70</div>
<div class="cell n" style="left:863.7px;top:536px">-0.50</div>
<div class="cell n" style="left:974.2px;top:536px">28</div>
<div class="strike" style="top:536px">41</div>
<div class="cell n" style="left:109.69999999999999px;top:566px">27</div>
<div class="cell n" style="left:218.89999999999998px;top:566px">0.43</div>
<div class="cell g" style="left:328.5px;top:566px">1.80</div>
<div class="cell g" style="left:438.79999999999995px;top:566px">1.84</div>
<div class="cell rd" style="left:644px;top:566px">3.20</div>
<div class="cell rd" style="left:754px;top:566px">3.30</div>
<div class="cell n" style="left:863.7px;top:566px">-0.57</div>
<div class="cell n" style="left:974.2px;top:566px">64</div>
<div class="strike" style="top:566px">42</div>
<div class="cell n" style="left:109.69999999999999px;top:596px">118</div>
<div class="cell n" style="left:218.89999999999998px;top:596px">0.37</div>
<div class="cell g" style="left:328.5px;top:596px">1.47</div>
<div class="cell g" style="left:438.79999999999995px;top:596px">1.49</div>
<div class="cell rd" style="left:644px;top:596px">3.85</div>
<div class="cell rd" style="left:754px;top:596px">3.95</div>
<div class="cell n" style="left:863.7px;top:596px">-0.63</div>
<div class="cell n" style="left:974.2px;top:596px">0</div>
<div class="strike" style="top:596px">43</div>
<div class="cell n" style="left:109.69999999999999px;top:626px">34</div>
<div class="cell n" style="left:218.89999999999998px;top:626px">0.32</div>
<div class="cell g" style="left:328.5px;top:626px">1.18</div>
<div class="cell g" style="left:438.79999999999995px;top:626px">1.22</div>
<div class="cell rd" style="left:644px;top:626px">4.60</div>
<div class="cell rd" style="left:754px;top:626px">4.70</div>
<div class="cell n" style="left:863.7px;top:626px">-0.69</div>
<div class="cell n" style="left:974.2px;top:626px">9</div>
<div class="strike" style="top:626px">44</div>
<div class="cell n" style="left:109.69999999999999px;top:656px">65</div>
<div class="cell n" style="left:218.89999999999998px;top:656px">0.27</div>
<div class="cell g" style="left:328.5px;top:656px">0.95</div>
<div class="cell g" style="left:438.79999999999995px;top:656px">0.97</div>
<div class="cell rd" style="left:644px;top:656px">5.35</div>
<div class="cell rd" style="left:754px;top:656px">5.45</div>
<div class="cell n" style="left:863.7px;top:656px">-0.74</div>
<div class="cell n" style="left:974.2px;top:656px">0</div>
<div class="strike" style="top:656px">45</div>
<div class="cell n" style="left:109.69999999999999px;top:686px">23</div>
<div class="cell n" style="left:218.89999999999998px;top:686px">0.23</div>
<div class="cell pg" style="left:328.5px;top:686px">0.76</div>
<div class="cell pg" style="left:438.79999999999995px;top:686px">0.79</div>
<div class="cell rd" style="left:644px;top:686px">6.15</div>
<div class="cell rd" style="left:754px;top:686px">6.25</div>
<div class="cell n" style="left:863.7px;top:686px">-0.78</div>
<div class="cell n" style="left:974.2px;top:686px">5</div>
<div class="strike" style="top:686px">46</div>
<div class="cell n" style="left:109.69999999999999px;top:716px">17</div>
<div class="cell n" style="left:218.89999999999998px;top:716px">0.19</div>
<div class="cell pg" style="left:328.5px;top:716px">0.60</div>
<div class="cell pg" style="left:438.79999999999995px;top:716px">0.64</div>
<div class="cell rd" style="left:644px;top:716px">7.00</div>
<div class="cell rd" style="left:754px;top:716px">7.10</div>
<div class="cell n" style="left:863.7px;top:716px">-0.82</div>
<div class="cell n" style="left:974.2px;top:716px">1</div>
<div class="strike" style="top:716px">47</div>
<div class="cell n" style="left:109.69999999999999px;top:746px">4</div>
<div class="cell n" style="left:218.89999999999998px;top:746px">0.16</div>
<div class="cell g" style="left:328.5px;top:746px">0.48</div>
<div class="cell g" style="left:438.79999999999995px;top:746px">0.51</div>
<div class="cell rd" style="left:644px;top:746px">7.90</div>
<div class="cell rd" style="left:754px;top:746px">8.00</div>
<div class="cell n" style="left:863.7px;top:746px">-0.86</div>
<div class="cell n" style="left:974.2px;top:746px">4</div>
<div class="strike" style="top:746px">48</div>
<div class="cell n" style="left:109.69999999999999px;top:776px">33</div>
<div class="cell n" style="left:218.89999999999998px;top:776px">0.13</div>
<div class="cell g" style="left:328.5px;top:776px">0.38</div>
<div class="cell g" style="left:438.79999999999995px;top:776px">0.40</div>
<div class="cell rd" style="left:644px;top:776px">8.80</div>
<div class="cell rd" style="left:754px;top:776px">8.90</div>
<div class="cell n" style="left:863.7px;top:776px">-0.88</div>
<div class="cell n" style="left:974.2px;top:776px">0</div>
<div class="strike" style="top:776px">49</div>
<div class="a" style="left:44px;top:535px;width:1095px;height:2px;background:#a6613a;"></div>
<div class="a" style="left:618px;top:531px;width:10.400px;height:10.400px;border-radius:50%;border:3.100px solid #63b000;background:#6a5a3a"></div>
<div class="a" style="left:514.20px;top:527.78px;font-size:7.07px;line-height:9px;color:#c9672f;transform:scaleX(0.9612);transform-origin:0 50%;">ITM</div>
<svg class="a" style="left:529px;top:531px" width="10" height="5" viewBox="0 0 10 5"><path d="M0 5 L5 0 L10 5z" fill="#e8772e"/></svg>
<svg class="a" style="left:642px;top:537px" width="10" height="5" viewBox="0 0 10 5"><path d="M0 0 L5 5 L10 0z" fill="#e8772e"/></svg>
<div class="a" style="left:655.70px;top:536.48px;font-size:7.07px;line-height:9px;color:#c9672f;transform:scaleX(1.0182);transform-origin:0 50%;">ITM</div>
<div class="a" style="left:44px;top:807px;width:1095px;height:5px;background:#405463;"></div>
<div class="a" style="left:544px;top:807px;width:95px;height:5px;background:#5f707d;"></div>
<div class="a" style="left:44px;top:812px;width:1095px;height:1px;background:#3c3c3c;"></div>
<div class="a" style="left:44px;top:842px;width:1095px;height:1px;background:#444;"></div>
<div class="a" style="left:48.69px;top:818.16px;font-size:15.29px;line-height:20px;color:#858585;transform:scaleX(0.9138);transform-origin:0 50%;">POP</div>
<div class="a" style="left:83.20px;top:819.06px;font-size:14.56px;line-height:19px;color:#fff;transform:scaleX(0.9184);transform-origin:0 50%;">59%</div>
<div class="a" style="left:168.94px;top:818.16px;font-size:15.29px;line-height:20px;color:#858585;transform:scaleX(0.8561);transform-origin:0 50%;">EXT</div>
<div class="a" style="left:199.40px;top:819.06px;font-size:14.56px;line-height:19px;color:#fff;transform:scaleX(0.8701);transform-origin:0 50%;">40</div>
<div class="a" style="left:270.82px;top:818.16px;font-size:15.29px;line-height:20px;color:#858585;transform:scaleX(0.9809);transform-origin:0 50%;">P50</div>
<div class="a" style="left:302.50px;top:819.06px;font-size:14.56px;line-height:19px;color:#fff;transform:scaleX(0.9081);transform-origin:0 50%;">68%</div>
<div class="a" style="left:386.80px;top:818.16px;font-size:15.29px;line-height:20px;color:#858585;">β Delta</div>
<div class="a" style="left:442.30px;top:819.06px;font-size:14.56px;line-height:19px;color:#fff;transform:scaleX(0.8982);transform-origin:0 50%;">-0.03</div>
<div class="a" style="left:531.20px;top:818.16px;font-size:15.29px;line-height:20px;color:#858585;transform:scaleX(0.9728);transform-origin:0 50%;">Theta</div>
<div class="a" style="left:575.30px;top:819.06px;font-size:14.56px;line-height:19px;color:#fff;transform:scaleX(0.9170);transform-origin:0 50%;">0.439</div>
<div class="a" style="left:666.58px;top:818.16px;font-size:15.29px;line-height:20px;color:#858585;transform:scaleX(1.0182);transform-origin:0 50%;">Max Prof</div>
<div class="a" style="left:734.40px;top:819.06px;font-size:14.56px;line-height:19px;color:#fff;transform:scaleX(0.8825);transform-origin:0 50%;">40</div>
<div class="a" style="left:806.51px;top:818.16px;font-size:15.29px;line-height:20px;color:#858585;transform:scaleX(0.9868);transform-origin:0 50%;">Max Loss</div>
<div class="a" style="left:876.80px;top:819.06px;font-size:14.56px;line-height:19px;color:#fff;transform:scaleX(0.9076);transform-origin:0 50%;">-60</div>
<div class="a" style="left:953.65px;top:818.16px;font-size:15.29px;line-height:20px;color:#858585;transform:scaleX(0.9488);transform-origin:0 50%;">BP Eff</div>
<div class="a" style="left:1000.40px;top:819.06px;font-size:14.56px;line-height:19px;color:#fff;transform:scaleX(0.9115);transform-origin:0 50%;">60.00</div>
<div class="a" style="left:1038.00px;top:820.97px;font-size:13.0px;line-height:17px;color:#df1b0c;transform:scaleX(0.9136);transform-origin:0 50%;">db</div>
<svg class="a" style="left:1114.8px;top:823.5px;overflow:visible" width="14.20" height="9.20"><path d="M1.24 1.24 L7.10 6.73 L12.96 1.24" fill="none" stroke="#b0b0b0" stroke-width="3.50" stroke-miterlimit="10"/></svg>
<div class="a" style="left:34px;top:801px;width:95px;height:51px;border:5px solid #ffd800"></div>
<div class="a" style="left:254px;top:801.5px;width:98.39999999999998px;height:52.5px;border:5px solid #ffd800"></div>
<div class="a" style="left:656px;top:808px;width:260px;height:44px;border:5px solid #ffd800"></div>
<div class="a" style="left:117.30px;top:852.77px;font-size:12.48px;line-height:16px;color:#858585;transform:scaleX(0.9189);transform-origin:0 50%;">Strikes</div>
<div class="a" style="left:302.50px;top:852.77px;font-size:12.48px;line-height:16px;color:#858585;transform:scaleX(0.9425);transform-origin:0 50%;">Width</div>
<div class="a" style="left:477.50px;top:852.77px;font-size:12.48px;line-height:16px;color:#858585;transform:scaleX(0.9428);transform-origin:0 50%;">Quantity</div>
<div class="a" style="left:653.75px;top:852.77px;font-size:12.48px;line-height:16px;color:#858585;transform:scaleX(0.9529);transform-origin:0 50%;">Expirations</div>
<div class="a" style="left:805.30px;top:852.77px;font-size:12.48px;line-height:16px;color:#858585;transform:scaleX(0.8798);transform-origin:0 50%;">Swap</div>
<div class="a" style="left:927.50px;top:852.77px;font-size:12.48px;line-height:16px;color:#858585;transform:scaleX(0.9343);transform-origin:0 50%;">Undo/Redo</div>
<div class="a" style="left:1080.30px;top:852.77px;font-size:12.48px;line-height:16px;color:#858585;transform:scaleX(0.8838);transform-origin:0 50%;">Clear</div>
<div class="a" style="left:44px;top:872px;width:1095px;height:29px;background:#333;"></div>
<div class="a" style="left:44px;top:901px;width:1095px;height:1px;background:#505050;"></div>
<div class="a" style="left:224px;top:872px;width:1px;height:28px;background:#222;"></div>
<div class="a" style="left:225px;top:872px;width:1px;height:28px;background:#626262;"></div>
<div class="a" style="left:407px;top:872px;width:1px;height:28px;background:#222;"></div>
<div class="a" style="left:408px;top:872px;width:1px;height:28px;background:#626262;"></div>
<div class="a" style="left:589px;top:872px;width:1px;height:28px;background:#222;"></div>
<div class="a" style="left:590px;top:872px;width:1px;height:28px;background:#626262;"></div>
<div class="a" style="left:772px;top:872px;width:1px;height:28px;background:#222;"></div>
<div class="a" style="left:773px;top:872px;width:1px;height:28px;background:#626262;"></div>
<div class="a" style="left:863px;top:872px;width:1px;height:28px;background:#222;"></div>
<div class="a" style="left:864px;top:872px;width:1px;height:28px;background:#626262;"></div>
<div class="a" style="left:1046px;top:872px;width:1px;height:28px;background:#222;"></div>
<div class="a" style="left:1047px;top:872px;width:1px;height:28px;background:#626262;"></div>
<div class="a" style="left:132.2px;top:876.3px;width:1.5px;height:19.5px;background:repeating-linear-gradient(180deg,#474747 0 2.300px,transparent 2.300px 4.250px);"></div>
<div class="a" style="left:315.2px;top:876.3px;width:1.5px;height:19.5px;background:repeating-linear-gradient(180deg,#474747 0 2.300px,transparent 2.300px 4.250px);"></div>
<div class="a" style="left:497.2px;top:876.3px;width:1.5px;height:19.5px;background:repeating-linear-gradient(180deg,#474747 0 2.300px,transparent 2.300px 4.250px);"></div>
<div class="a" style="left:680.2px;top:876.3px;width:1.5px;height:19.5px;background:repeating-linear-gradient(180deg,#474747 0 2.300px,transparent 2.300px 4.250px);"></div>
<div class="a" style="left:954.2px;top:876.3px;width:1.5px;height:19.5px;background:repeating-linear-gradient(180deg,#474747 0 2.300px,transparent 2.300px 4.250px);"></div>
<svg class="a" style="left:81px;top:877.5px;overflow:visible" width="15.70" height="9.80"><path d="M1.13 8.67 L7.85 2.26 L14.57 8.67" fill="none" stroke="#c2c2c2" stroke-width="3.20" stroke-miterlimit="10"/></svg>
<svg class="a" style="left:81px;top:886.3px;overflow:visible" width="15.70" height="9.80"><path d="M1.13 8.67 L7.85 2.26 L14.57 8.67" fill="none" stroke="#c2c2c2" stroke-width="3.20" stroke-miterlimit="10"/></svg>
<svg class="a" style="left:171px;top:877.5px;overflow:visible" width="15.20" height="9.50"><path d="M1.13 1.13 L7.60 7.24 L14.07 1.13" fill="none" stroke="#c2c2c2" stroke-width="3.20" stroke-miterlimit="10"/></svg>
<svg class="a" style="left:171px;top:885.9px;overflow:visible" width="15.20" height="10.00"><path d="M1.13 1.13 L7.60 7.74 L14.07 1.13" fill="none" stroke="#c2c2c2" stroke-width="3.20" stroke-miterlimit="10"/></svg>
<svg class="a" style="left:265.2px;top:876px;overflow:visible" width="15.30" height="9.70"><path d="M1.13 1.13 L7.65 7.44 L14.17 1.13" fill="none" stroke="#c2c2c2" stroke-width="3.20" stroke-miterlimit="10"/></svg>
<svg class="a" style="left:265.2px;top:886.6px;overflow:visible" width="15.30" height="9.50"><path d="M1.13 8.37 L7.65 2.26 L14.17 8.37" fill="none" stroke="#c2c2c2" stroke-width="3.20" stroke-miterlimit="10"/></svg>
<svg class="a" style="left:354.8px;top:875.1px;overflow:visible" width="15.20" height="10.00"><path d="M1.13 8.87 L7.60 2.26 L14.07 8.87" fill="none" stroke="#c2c2c2" stroke-width="3.20" stroke-miterlimit="10"/></svg>
<svg class="a" style="left:354.8px;top:887.6px;overflow:visible" width="15.20" height="9.70"><path d="M1.13 1.13 L7.60 7.44 L14.07 1.13" fill="none" stroke="#c2c2c2" stroke-width="3.20" stroke-miterlimit="10"/></svg>
<svg class="a" style="left:447.7px;top:877.8px;overflow:visible" width="12.30" height="17.30"><path d="M10.81 1.49 L2.97 8.65 L10.81 15.81" fill="none" stroke="#c2c2c2" stroke-width="4.20" stroke-miterlimit="10"/></svg>
<svg class="a" style="left:538.3px;top:877.8px;overflow:visible" width="12.60" height="17.30"><path d="M1.49 1.49 L9.63 8.65 L1.49 15.81" fill="none" stroke="#c2c2c2" stroke-width="4.20" stroke-miterlimit="10"/></svg>
<div class="a" style="left:628.60px;top:884.68px;font-size:8.53px;line-height:11px;color:#c2c2c2;transform:scaleX(0.8131);transform-origin:0 50%;">TIME</div>
<div class="a" style="left:634px;top:880.6px;width:6.2px;height:1.2px;background:#c2c2c2;"></div>
<div class="a" style="left:718.30px;top:884.68px;font-size:8.53px;line-height:11px;color:#c2c2c2;transform:scaleX(0.8131);transform-origin:0 50%;">TIME</div>
<div class="a" style="left:724.1px;top:880.9px;width:5.6px;height:1.2px;background:#c2c2c2;"></div>
<div class="a" style="left:726.3px;top:878.9px;width:1.2px;height:5.2px;background:#c2c2c2;"></div>
<svg class="a" style="left:805.9px;top:879px" width="26" height="15" viewBox="0 0 26 15"><path d="M5.200 3.300 H13.500 Q17.200 3.300 19.600 7.400" fill="none" stroke="#c2c2c2" stroke-width="2.200"/><path d="M0 3.200 L5.600 0 V6.400z" fill="#c2c2c2"/><path d="M20.200 11.700 H12 Q8.400 11.700 6.400 8.300" fill="none" stroke="#c2c2c2" stroke-width="2.200"/><path d="M25.100 11.700 L19.800 8.400 V15z" fill="#c2c2c2"/></svg>
<svg class="a" style="left:903px;top:881px" width="17" height="12" viewBox="0 0 17 12"><path d="M7 0.800 L0.800 5.600 L7 10.400 V7.600 Q11.500 7.400 15.600 11 Q14 4.200 7 3.600z" fill="none" stroke="#5b8bb0" stroke-width="1.300" stroke-linejoin="round"/></svg>
<svg class="a" style="left:993px;top:881px" width="17" height="12" viewBox="0 0 17 12"><path d="M10 0.800 L16.200 5.600 L10 10.400 V7.600 Q5.500 7.400 1.400 11 Q3 4.200 10 3.600z" fill="none" stroke="#3f5f78" stroke-width="1.300" stroke-linejoin="round"/></svg>
<svg class="a" style="left:1085.7px;top:878.1px" width="17" height="17" viewBox="0 0 17 17"><g transform="rotate(-60 8.500 8.500)"><path d="M3.650 5 H10 V12 H3.650 A3.500 3.500 0 0 1 3.650 5z" fill="#a82a20"/><path d="M10 5.500 H13.350 A3 3 0 0 1 13.350 11.500 H10z" fill="none" stroke="#a82a20" stroke-width="1.100"/><path d="M10 5 V12" stroke="#a82a20" stroke-width="1"/></g></svg>
<div class="a" style="left:49.70px;top:910.47px;font-size:13.31px;line-height:17px;color:#858585;transform:scaleX(0.9317);transform-origin:0 50%;">Order</div>
<div class="a" style="left:336.70px;top:910.37px;font-size:13.31px;line-height:17px;color:#858585;transform:scaleX(0.7669);transform-origin:0 50%;">GDXJ</div>
<div class="a" style="left:49px;top:934px;width:219px;height:20px;background:#1c1c1c;border-radius:3px"></div>
<div class="a" style="left:49px;top:934px;width:40.3px;height:20px;background:#303030;border-radius:3px 0 0 3px"></div>
<div class="a" style="left:89.8px;top:934px;width:45.3px;height:20px;background:#404040;"></div>
<div class="a" style="left:135.9px;top:934px;width:35.1px;height:20px;background:#303030;"></div>
<div class="a" style="left:171.8px;top:934px;width:40.3px;height:20px;background:#404040;"></div>
<div class="a" style="left:212.9px;top:934px;width:19.7px;height:20px;background:#303030;"></div>
<div class="a" style="left:233.1px;top:934px;width:34.9px;height:20px;background:#404040;border-radius:0 3px 3px 0"></div>
<div class="a" style="left:78.30px;top:936.27px;font-size:13.31px;line-height:17px;color:#e8e8e8;">1</div>
<div class="a" style="left:95.00px;top:936.27px;font-size:13.31px;line-height:17px;color:#ececec;transform:scaleX(0.8793);transform-origin:0 50%;">Apr 17</div>
<div class="a" style="left:144.00px;top:936.27px;font-size:13.31px;line-height:17px;color:#787878;transform:scaleX(0.8765);transform-origin:0 50%;">45d</div>
<div class="a" style="left:185.90px;top:936.27px;font-size:13.31px;line-height:17px;color:#ececec;transform:scaleX(0.8753);transform-origin:0 50%;">36</div>
<div class="a" style="left:218.60px;top:936.27px;font-size:13.31px;line-height:17px;color:#787878;transform:scaleX(0.9200);transform-origin:0 50%;">P</div>
<div class="a" style="left:238.77px;top:936.27px;font-size:13.31px;line-height:17px;color:#62b10e;transform:scaleX(0.8272);transform-origin:0 50%;">BTO</div>
<div class="a" style="left:328.41px;top:936.27px;font-size:13.52px;line-height:18px;color:#f0f0f0;transform:scaleX(0.8855);transform-origin:0 50%;">@0.75</div>
<div class="a" style="left:49px;top:959px;width:219px;height:20px;background:#1c1c1c;border-radius:3px"></div>
<div class="a" style="left:49px;top:959px;width:40.3px;height:20px;background:#303030;border-radius:3px 0 0 3px"></div>
<div class="a" style="left:89.8px;top:959px;width:45.3px;height:20px;background:#404040;"></div>
<div class="a" style="left:135.9px;top:959px;width:35.1px;height:20px;background:#303030;"></div>
<div class="a" style="left:171.8px;top:959px;width:40.3px;height:20px;background:#404040;"></div>
<div class="a" style="left:212.9px;top:959px;width:19.7px;height:20px;background:#303030;"></div>
<div class="a" style="left:233.1px;top:959px;width:34.9px;height:20px;background:#404040;border-radius:0 3px 3px 0"></div>
<div class="a" style="left:73.87px;top:961.27px;font-size:13.31px;line-height:17px;color:#e8e8e8;">-1</div>
<div class="a" style="left:95.00px;top:961.27px;font-size:13.31px;line-height:17px;color:#ececec;transform:scaleX(0.8793);transform-origin:0 50%;">Apr 17</div>
<div class="a" style="left:144.00px;top:961.27px;font-size:13.31px;line-height:17px;color:#787878;transform:scaleX(0.8765);transform-origin:0 50%;">45d</div>
<div class="a" style="left:185.90px;top:961.27px;font-size:13.31px;line-height:17px;color:#ececec;transform:scaleX(0.8753);transform-origin:0 50%;">37</div>
<div class="a" style="left:218.60px;top:961.27px;font-size:13.31px;line-height:17px;color:#787878;transform:scaleX(0.9200);transform-origin:0 50%;">P</div>
<div class="a" style="left:239.60px;top:961.27px;font-size:13.31px;line-height:17px;color:#df1b0c;transform:scaleX(0.7962);transform-origin:0 50%;">STO</div>
<div class="a" style="left:328.41px;top:961.27px;font-size:13.52px;line-height:18px;color:#f0f0f0;transform:scaleX(0.8855);transform-origin:0 50%;">@0.97</div>
<div class="a" style="left:49px;top:984px;width:219px;height:20px;background:#1c1c1c;border-radius:3px"></div>
<div class="a" style="left:49px;top:984px;width:40.3px;height:20px;background:#303030;border-radius:3px 0 0 3px"></div>
<div class="a" style="left:89.8px;top:984px;width:45.3px;height:20px;background:#404040;"></div>
<div class="a" style="left:135.9px;top:984px;width:35.1px;height:20px;background:#303030;"></div>
<div class="a" style="left:171.8px;top:984px;width:40.3px;height:20px;background:#404040;"></div>
<div class="a" style="left:212.9px;top:984px;width:19.7px;height:20px;background:#303030;"></div>
<div class="a" style="left:233.1px;top:984px;width:34.9px;height:20px;background:#404040;border-radius:0 3px 3px 0"></div>
<div class="a" style="left:73.87px;top:986.27px;font-size:13.31px;line-height:17px;color:#e8e8e8;">-1</div>
<div class="a" style="left:95.00px;top:986.27px;font-size:13.31px;line-height:17px;color:#ececec;transform:scaleX(0.8793);transform-origin:0 50%;">Apr 17</div>
<div class="a" style="left:144.00px;top:986.27px;font-size:13.31px;line-height:17px;color:#787878;transform:scaleX(0.8765);transform-origin:0 50%;">45d</div>
<div class="a" style="left:185.90px;top:986.27px;font-size:13.31px;line-height:17px;color:#ececec;transform:scaleX(0.8753);transform-origin:0 50%;">46</div>
<div class="a" style="left:218.60px;top:986.27px;font-size:13.31px;line-height:17px;color:#787878;transform:scaleX(0.9200);transform-origin:0 50%;">C</div>
<div class="a" style="left:239.60px;top:986.27px;font-size:13.31px;line-height:17px;color:#df1b0c;transform:scaleX(0.7962);transform-origin:0 50%;">STO</div>
<div class="a" style="left:328.41px;top:986.27px;font-size:13.52px;line-height:18px;color:#f0f0f0;transform:scaleX(0.8855);transform-origin:0 50%;">@0.76</div>
<div class="a" style="left:49px;top:1009px;width:219px;height:20px;background:#1c1c1c;border-radius:3px"></div>
<div class="a" style="left:49px;top:1009px;width:40.3px;height:20px;background:#303030;border-radius:3px 0 0 3px"></div>
<div class="a" style="left:89.8px;top:1009px;width:45.3px;height:20px;background:#404040;"></div>
<div class="a" style="left:135.9px;top:1009px;width:35.1px;height:20px;background:#303030;"></div>
<div class="a" style="left:171.8px;top:1009px;width:40.3px;height:20px;background:#404040;"></div>
<div class="a" style="left:212.9px;top:1009px;width:19.7px;height:20px;background:#303030;"></div>
<div class="a" style="left:233.1px;top:1009px;width:34.9px;height:20px;background:#404040;border-radius:0 3px 3px 0"></div>
<div class="a" style="left:78.30px;top:1011.27px;font-size:13.31px;line-height:17px;color:#e8e8e8;">1</div>
<div class="a" style="left:95.00px;top:1011.27px;font-size:13.31px;line-height:17px;color:#ececec;transform:scaleX(0.8793);transform-origin:0 50%;">Apr 17</div>
<div class="a" style="left:144.00px;top:1011.27px;font-size:13.31px;line-height:17px;color:#787878;transform:scaleX(0.8765);transform-origin:0 50%;">45d</div>
<div class="a" style="left:185.90px;top:1011.27px;font-size:13.31px;line-height:17px;color:#ececec;transform:scaleX(0.8753);transform-origin:0 50%;">47</div>
<div class="a" style="left:218.60px;top:1011.27px;font-size:13.31px;line-height:17px;color:#787878;transform:scaleX(0.9200);transform-origin:0 50%;">C</div>
<div class="a" style="left:238.77px;top:1011.27px;font-size:13.31px;line-height:17px;color:#62b10e;transform:scaleX(0.8272);transform-origin:0 50%;">BTO</div>
<div class="a" style="left:328.44px;top:1011.27px;font-size:13.52px;line-height:18px;color:#f0f0f0;transform:scaleX(0.8631);transform-origin:0 50%;">@0.64</div>
<div class="a" style="left:378.65px;top:909.77px;font-size:13.31px;line-height:17px;color:#858585;transform:scaleX(0.9461);transform-origin:0 50%;">Limit Price</div>
<div class="a" style="left:379px;top:932px;width:440px;height:30px;background:#333;border:1px solid #727272"></div>
<div class="a" style="left:580.40px;top:934.65px;font-size:19.03px;line-height:25px;color:#fff;font-weight:bold;transform:scaleX(1.0073);transform-origin:0 50%;">0.40</div>
<svg class="a" style="left:388.9px;top:940.6px;overflow:visible" width="18.30" height="12.60"><path d="M1.70 1.70 L9.15 9.21 L16.60 1.70" fill="none" stroke="#8a8a8a" stroke-width="4.80" stroke-miterlimit="10"/></svg>
<svg class="a" style="left:790px;top:941.6px;overflow:visible" width="18.30" height="12.60"><path d="M1.70 10.90 L9.15 3.39 L16.60 10.90" fill="none" stroke="#8a8a8a" stroke-width="4.80" stroke-miterlimit="10"/></svg>
<svg class="a" style="left:827px;top:940px" width="14" height="16" viewBox="0 0 14 16"><path d="M3.800 7 V5 Q3.800 1.200 7 1.200 Q10.200 1.200 10.200 5 V7" fill="none" stroke="#858585" stroke-width="2"/><rect x="0.500" y="6.800" width="13" height="8.700" rx="1" fill="#858585"/><rect x="6.200" y="9" width="1.600" height="3.800" fill="#262626"/></svg>
<div class="a" style="left:379.60px;top:978.17px;font-size:12.69px;line-height:16px;color:#858585;transform:scaleX(0.9607);transform-origin:0 50%;">nat</div>
<div class="a" style="left:588.60px;top:977.47px;font-size:12.69px;line-height:16px;color:#858585;transform:scaleX(1.0153);transform-origin:0 50%;">mid</div>
<div class="a" style="left:379px;top:998px;width:440px;height:10px;background:#333;"></div>
<div class="a" style="left:598px;top:998px;width:2px;height:10px;background:#999;"></div>
<div class="a" style="left:379.60px;top:1013.77px;font-size:12.69px;line-height:16px;color:#858585;transform:scaleX(0.9201);transform-origin:0 50%;">0.34 cr</div>
<div class="a" style="left:580.40px;top:1013.77px;font-size:12.69px;line-height:16px;color:#858585;transform:scaleX(0.9226);transform-origin:0 50%;">0.40 cr</div>
<div class="a" style="left:781.40px;top:1013.77px;font-size:12.69px;line-height:16px;color:#858585;transform:scaleX(0.9403);transform-origin:0 50%;">0.47 cr</div>
<div class="a" style="left:869.60px;top:909.27px;font-size:13.31px;line-height:17px;color:#858585;transform:scaleX(0.9363);transform-origin:0 50%;">Order Type</div>
<div class="a" style="left:1004.80px;top:909.27px;font-size:13.31px;line-height:17px;color:#858585;transform:scaleX(0.7670);transform-origin:0 50%;">TIF</div>
<div class="a" style="left:869px;top:932px;width:125px;height:30px;background:#333;border:1px solid #6e6e6e"></div>
<div class="a" style="left:1004px;top:932px;width:125px;height:30px;background:#333;border:1px solid #6e6e6e"></div>
<div class="a" style="left:874.76px;top:939.17px;font-size:13.31px;line-height:17px;color:#858585;transform:scaleX(0.9432);transform-origin:0 50%;">Net Credit</div>
<div class="a" style="left:1009.71px;top:939.17px;font-size:13.31px;line-height:17px;color:#858585;transform:scaleX(0.8870);transform-origin:0 50%;">Day</div>
<svg class="a" style="left:976px;top:944px" width="12" height="6" viewBox="0 0 12 6"><path d="M0 0 H12 L6 6z" fill="#858585"/></svg>
<svg class="a" style="left:1111px;top:944px" width="12" height="6" viewBox="0 0 12 6"><path d="M0 0 H12 L6 6z" fill="#858585"/></svg>
<div class="a" style="left:869px;top:977px;width:270px;height:45px;background:#dc6c2d;"></div>
<div class="a" style="left:937.11px;top:988.76px;font-size:16.02px;line-height:21px;color:#111;font-weight:bold;transform:scaleX(0.8943);transform-origin:0 50%;">REVIEW &amp; SEND</div>
<svg class="a" style="left:1059.9px;top:995px;overflow:visible" width="10.20" height="14.00"><path d="M1.60 1.60 L7.00 7.00 L1.60 12.40" fill="none" stroke="#0a0a0a" stroke-width="4.53" stroke-miterlimit="10"/></svg>
<div class="a" style="left:0px;top:0px;width:14px;height:1034px;background:#000;"></div>
</body></html>
